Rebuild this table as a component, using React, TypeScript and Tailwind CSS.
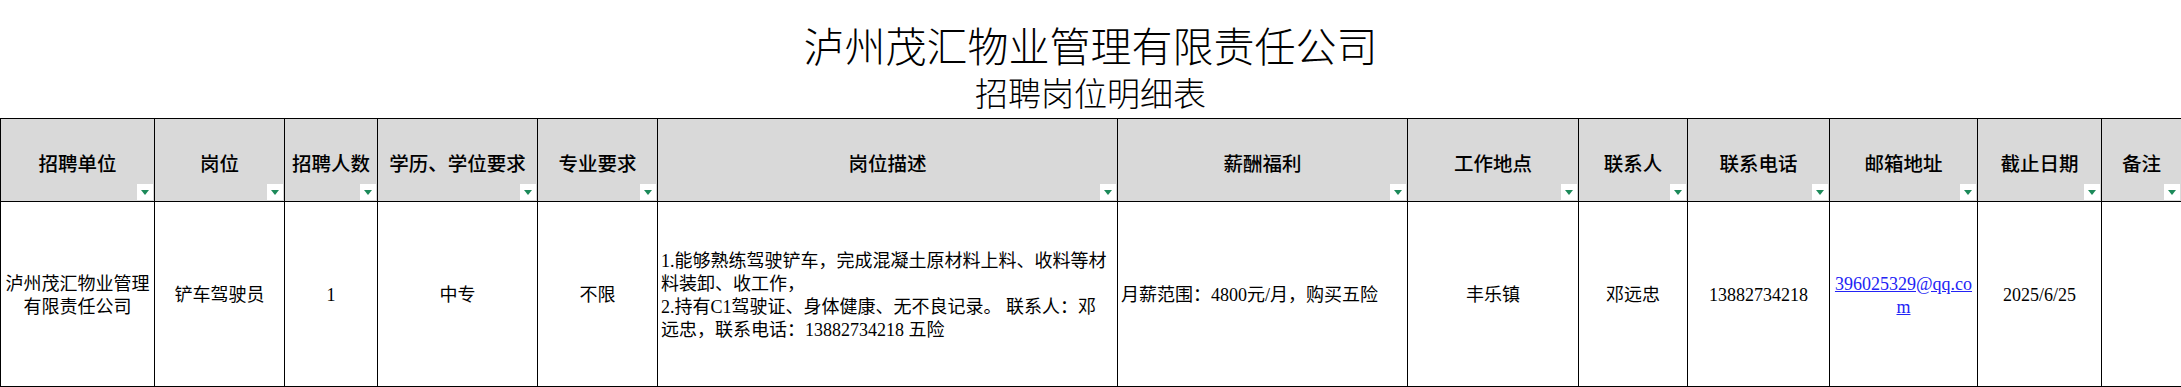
import React from 'react';

const headers = [
  '招聘单位',
  '岗位',
  '招聘人数',
  '学历、学位要求',
  '专业要求',
  '岗位描述',
  '薪酬福利',
  '工作地点',
  '联系人',
  '联系电话',
  '邮箱地址',
  '截止日期',
  '备注',
];

const FilterButton = () => (
  <div className="absolute right-[1px] bottom-[1px] w-4 h-4 bg-white flex items-center justify-center">
    <div className="w-0 h-0 border-l-[4px] border-r-[4px] border-t-[5px] border-l-transparent border-r-transparent border-t-[#1d8a5a]" />
  </div>
);

const Cell = ({ children, left = false }: { children?: React.ReactNode; left?: boolean }) => (
  <div
    className={`h-[185px] border-r border-b border-black flex flex-col justify-center pt-[3px] leading-[23px] whitespace-nowrap ${
      left ? 'items-start pl-[3px]' : 'items-center text-center'
    }`}
  >
    {children}
  </div>
);

const App = () => {
  return (
    <div className="w-[2181px] h-[387px] bg-white text-black overflow-hidden">
      <div className="flex flex-col items-center pt-[24px] mb-[9px] font-['Noto_Sans_CJK_SC',sans-serif] font-light">
        <h1 className="text-[41px] leading-[41px]">泸州茂汇物业管理有限责任公司</h1>
        <h2 className="text-[33px] leading-[33px] mt-[11px]">招聘岗位明细表</h2>
      </div>

      <div className="grid grid-cols-[154px_130px_93px_160px_120px_460px_290px_171px_109px_142px_148px_124px_80px] border-t border-l border-black">
        {headers.map((h) => (
          <div
            key={h}
            className="relative h-[83px] bg-[#d9d9d9] border-r border-b border-black flex items-center justify-center pt-[5px] whitespace-nowrap text-[19.5px] font-medium font-['Noto_Sans_CJK_SC',sans-serif]"
          >
            {h}
            <FilterButton />
          </div>
        ))}

        <div className="contents text-[18px] font-['Liberation_Serif','Noto_Sans_CJK_SC',serif]">
          <Cell>
            <span>泸州茂汇物业管理</span>
            <span>有限责任公司</span>
          </Cell>
          <Cell>铲车驾驶员</Cell>
          <Cell>1</Cell>
          <Cell>中专</Cell>
          <Cell>不限</Cell>
          <Cell left>
            <span>1.能够熟练驾驶铲车，完成混凝土原材料上料、收料等材</span>
            <span>料装卸、收工作，</span>
            <span>2.持有C1驾驶证、身体健康、无不良记录。 联系人：邓</span>
            <span>远忠，联系电话：13882734218 五险</span>
          </Cell>
          <Cell left>月薪范围：4800元/月，购买五险</Cell>
          <Cell>丰乐镇</Cell>
          <Cell>邓远忠</Cell>
          <Cell>13882734218</Cell>
          <Cell>
            <a className="text-[#2323f5] underline" href="#">
              396025329@qq.co
              <br />m
            </a>
          </Cell>
          <Cell>2025/6/25</Cell>
          <Cell />
        </div>
      </div>
    </div>
  );
};

export default App;
